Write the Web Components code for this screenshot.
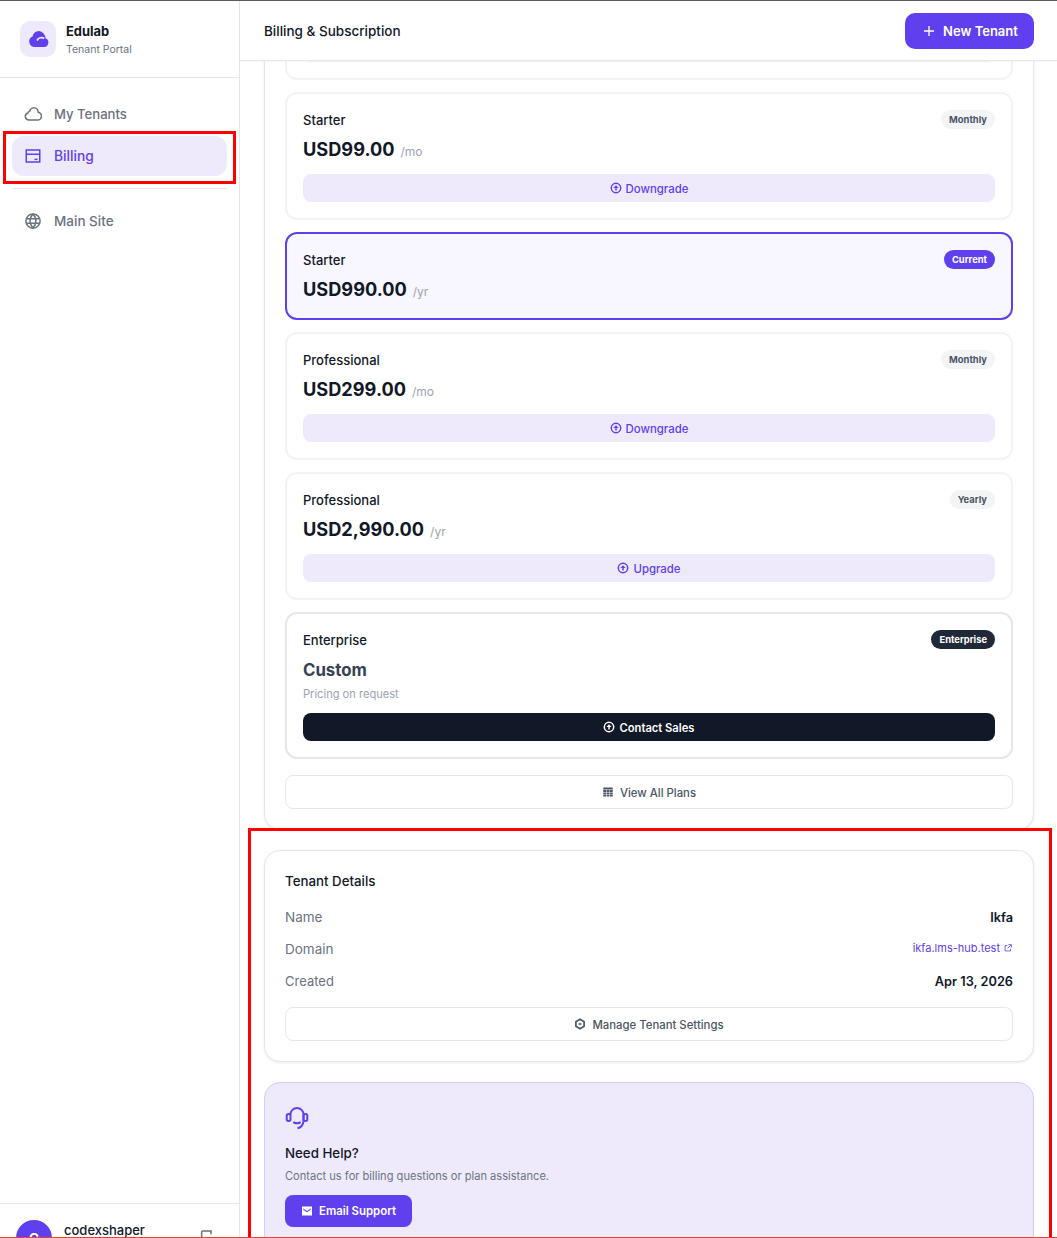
<!DOCTYPE html>
<html lang="en"><head><meta charset="utf-8"><title>Billing</title>
<style>
html,body{margin:0;height:1238px;overflow:hidden;background:#fff;font-family:Inter,"Liberation Sans",sans-serif;color:#111827}
</style></head><body>
<app-shell>
  <app-sidebar slot="side"></app-sidebar>
  <app-header slot="head" title="Billing &amp; Subscription"></app-header>
  <main-panel slot="main">
    <plan-list>
      <plan-card kind="stub"></plan-card>
      <plan-card name="Starter" price="USD99.00" per="/mo" badge="Monthly" action="Downgrade"></plan-card>
      <plan-card kind="current" name="Starter" price="USD990.00" per="/yr" badge="Current"></plan-card>
      <plan-card name="Professional" price="USD299.00" per="/mo" badge="Monthly" action="Downgrade"></plan-card>
      <plan-card name="Professional" price="USD2,990.00" per="/yr" badge="Yearly" action="Upgrade"></plan-card>
      <plan-card kind="enterprise" name="Enterprise" price="Custom" note="Pricing on request" badge="Enterprise" action="Contact Sales"></plan-card>
    </plan-list>
    <tenant-details></tenant-details>
    <help-card></help-card>
  </main-panel>
</app-shell>
<script>
const TINT='#eeeafc',BRAND='#6040ee';
const P={
 cloudFill:`<path fill="currentColor" d="M13 4a7 7 0 0 0-6.5 5.5A5.5 5.5 0 0 0 8 20h10a4.5 4.5 0 0 0 1.5-8.7A7.5 7.5 0 0 0 13 4z"/><path fill="none" stroke="${TINT}" stroke-width="1.7" d="M11 13.5c1.5-3 5-3.6 7.2-2"/>`,
 cloud:'<path fill="none" stroke="currentColor" stroke-width="2" d="M13 3.5a6 6 0 0 1 5.9 6.3 5.1 5.1 0 0 1-1.4 10.2H6.5a4.8 4.8 0 0 1-1.3-9.4 4 4 0 0 1 2.5-2.4A6 6 0 0 1 13 3.5z"/>',
 card:'<path fill="none" stroke="currentColor" stroke-width="2" d="M3 4h18v16H3zM3 9.5h18"/><path fill="currentColor" d="M14 15.5h4v2h-4z"/>',
 globe:'<g fill="none" stroke="currentColor" stroke-width="2"><circle cx="12" cy="12" r="9.5"/><path d="M3.2 9h17.6M3.2 15h17.6M12 2.5c-5.2 5.6-5.2 13.4 0 19M12 2.5c5.2 5.6 5.2 13.4 0 19"/></g>',
 plus:'<path fill="none" stroke="currentColor" stroke-width="2" d="M12 4.5v15M4.5 12h15"/>',
 up:'<g fill="none" stroke="currentColor" stroke-width="3"><circle cx="12" cy="12" r="9.4"/></g><path fill="currentColor" d="M12 6.4 17.2 12h-3.7v5h-3v-5H6.8z"/>',
 table:'<path fill="currentColor" d="M2.5 3h19v4h-19zM2.5 8.2h5.9v3.6H2.5zm7 0h5.2v3.6H9.5zm6.2 0h5.8v3.6h-5.8zM2.5 12.8h5.9v3.6H2.5zm7 0h5.2v3.6H9.5zm6.2 0h5.8v3.6h-5.8zM2.5 17.4h5.9V21H2.5zm7 0h5.2V21H9.5zm6.2 0h5.8V21h-5.8z"/>',
 gear:'<g fill="none" stroke="currentColor"><path stroke-width="3.4" d="M12 2.6 20.2 7.3v9.4L12 21.4 3.8 16.7V7.3z"/><circle cx="12" cy="12" r="2" stroke-width="2"/></g>',
 headset:'<g fill="none" stroke="currentColor" stroke-width="2"><path d="M5.5 8.5a6.5 6.5 0 0 1 13 0v6.5c0 4-3 6.8-6 7.3"/><path d="M9 16.5c2 1 4 1 6 0" stroke-linecap="round"/><rect x="1.7" y="8" width="3.8" height="7" rx="1.7"/><rect x="18.5" y="8" width="3.8" height="7" rx="1.7"/></g>',
 mail:'<path fill="currentColor" fill-rule="evenodd" d="M3 3h18a1 1 0 0 1 1 1v16a1 1 0 0 1-1 1H3a1 1 0 0 1-1-1V4a1 1 0 0 1 1-1zm1.5 4v2.4l7.5 5 7.5-5V7L12 12z"/>',
 ext:'<path fill="none" stroke="currentColor" stroke-width="2" d="M10 6H5v13h13v-5M13 4h7v7M20 4l-9 9"/>',
 logout:'<path fill="none" stroke="currentColor" stroke-width="2.4" d="M4 22V5a2 2 0 0 1 2-2h12v5M4 22h14v-5"/>'
};
function def(name,render){customElements.define(name,class extends HTMLElement{
  connectedCallback(){if(this.shadowRoot)return;this.attachShadow({mode:'open'}).innerHTML=render(this)}
})}
def('x-icon',el=>`<style>:host{display:inline-flex;flex:none;width:var(--s,16px);height:var(--s,16px)}svg{width:100%;height:100%;display:block}</style><svg viewBox="0 0 24 24" aria-hidden="true">${P[el.getAttribute('n')]}</svg>`);

def('app-shell',()=>`<style>
:host{display:grid;grid-template-columns:240px 1fr;grid-template-rows:60px 1fr;height:1238px;box-sizing:border-box;border-top:1px solid #5c5c5c;position:relative;overflow:hidden}
.side{grid-row:1/3;min-height:0;display:flex}
.head{min-width:0}.main{min-height:0;min-width:0;overflow:hidden}
.mark{position:absolute;border:3px solid #f00;box-sizing:border-box;pointer-events:none}
.m1{left:3px;top:130px;width:233px;height:53px}
.m2{left:248px;top:827px;width:804px;height:420px}
.line{position:absolute;left:0;right:0;bottom:0;height:1px;background:#d64a3e}
</style>
<div class="side"><slot name="side"></slot></div>
<div class="head"><slot name="head"></slot></div>
<div class="main"><slot name="main"></slot></div>
<i class="mark m1"></i><i class="mark m2"></i><i class="line"></i>`);

def('nav-item',el=>`<style>
:host{display:flex;align-items:center;gap:12px;height:40px;padding:0 12px;border-radius:12px;font-size:13.5px;font-weight:500;color:#6b7280;--s:18px;box-sizing:border-box}
:host([active]){background:${TINT};color:${BRAND};font-size:13.8px}
</style><x-icon n="${el.getAttribute('icon')}"></x-icon><slot></slot>`);

def('app-sidebar',()=>`<style>
:host{display:flex;flex-direction:column;width:240px;box-sizing:border-box;border-right:1px solid #e5e7eb;background:#fff;height:100%}
.brand{display:flex;align-items:center;gap:10px;height:76px;padding:0 20px;border-bottom:1px solid #e5e7eb;flex:none}
.logo{width:36px;height:36px;border-radius:10px;background:${TINT};color:${BRAND};display:flex;align-items:center;justify-content:center;--s:24px}
.txt{padding-top:2px}
.t1{font-size:12.9px;font-weight:700;line-height:18px;color:#111827}
.t2{font-size:10.5px;line-height:17px;color:#6b7280}
nav{padding:16px 12px 0;display:flex;flex-direction:column;gap:2px;flex:1}
hr{border:0;border-top:1px solid #e5e7eb;margin:10px 0;width:100%}
.foot{height:35px;flex:none;box-sizing:border-box;border-top:1px solid #e5e7eb;display:flex;gap:12px;padding:16px 24px 0 16px;overflow:hidden}
.av{width:36px;height:36px;border-radius:50%;background:${BRAND};color:#fff;font-size:14px;font-weight:600;display:flex;align-items:center;justify-content:center;flex:none}
.name{font-size:13px;font-weight:500;line-height:13px;flex:1;color:#111827;padding-top:4px}
.foot x-icon{color:#6b7280;margin-top:9px;--s:16px}
</style>
<div class="brand"><div class="logo"><x-icon n="cloudFill"></x-icon></div><div class="txt"><div class="t1">Edulab</div><div class="t2">Tenant Portal</div></div></div>
<nav><nav-item icon="cloud" style="font-size:13.1px">My Tenants</nav-item><nav-item icon="card" active>Billing</nav-item><hr><nav-item icon="globe">Main Site</nav-item></nav>
<div class="foot"><div class="av">C</div><div class="name">codexshaper</div><x-icon n="logout"></x-icon></div>`);

def('app-btn',el=>`<style>
:host{display:inline-flex;align-items:center;justify-content:center;gap:var(--g,4px);box-sizing:border-box;border-radius:var(--r,8px);font-size:var(--f,11.4px);font-weight:500;--s:var(--icon,12px);white-space:nowrap}
:host([v=primary]){background:${BRAND};color:#fff;font-weight:600}
:host([v=tint]){background:${TINT};color:${BRAND};height:28px;width:100%}
:host([v=dark]){background:#111827;color:#fff;height:28px;width:100%;font-weight:600;--f:11.2px}
:host([v=outline]){border:1px solid #e5e7eb;color:#4b5563;height:34px;width:100%;--g:6px;--f:11.35px}
:host(:not([v=primary])) .t{padding-top:2px}
</style><x-icon n="${el.getAttribute('icon')}"></x-icon><span class="t"><slot></slot></span>`);

def('app-header',el=>`<style>
:host{display:flex;align-items:center;justify-content:space-between;height:60px;box-sizing:border-box;padding:0 23px 0 24px;border-bottom:1px solid #e5e7eb;background:#fff;position:relative;z-index:1;box-shadow:0 1px 2px rgba(0,0,0,.03)}
h1{margin:0;font-size:13.5px;font-weight:500;color:#111827}
app-btn{height:36px;width:129px;--r:10px;--f:13px;--g:6px;--icon:16px}
</style><h1>${el.getAttribute('title').replace('&','&amp;')}</h1><app-btn v="primary" icon="plus">New Tenant</app-btn>`);

def('main-panel',()=>`<style>
:host{display:flex;flex-direction:column;gap:20px;padding:0 23px 0 24px;margin-top:-60px}
</style><slot></slot>`);

def('plan-list',()=>`<style>
:host{display:block;border:1px solid #e5e7eb;border-radius:16px;padding:20px;box-shadow:0 1px 3px rgba(0,0,0,.08);background:#fff}
.list{display:flex;flex-direction:column;gap:12px;margin-bottom:16px}
</style><div class="list"><slot></slot></div><app-btn v="outline" icon="table">View All Plans</app-btn>`);

def('plan-card',el=>{
 const a=n=>el.getAttribute(n),k=a('kind')||'';
 if(k==='stub')return `<style>:host{display:block;box-sizing:border-box;height:58px;border:2px solid #f3f4f6;border-radius:12px;padding:0 16px}.b{height:38px;background:#f3f4f6;border-radius:8px}</style><div class="b"></div>`;
 const v=k==='enterprise'?'dark':'tint';
 return `<style>
:host{display:block;box-sizing:border-box;border:2px solid #f3f4f6;border-radius:12px;padding:16px;background:#fff}
:host([kind=current]){border-color:${BRAND};background:#f8f6fe}
:host([kind=enterprise]){border-color:#e5e7eb}
.top{display:flex;justify-content:space-between;align-items:flex-start;height:21px}
.name{font-size:13px;font-weight:500;line-height:21px;color:#111827}
.badge{font-size:9.4px;font-weight:700;line-height:19px;height:19px;padding:0 8px;border-radius:10px;background:#f3f4f6;color:#4b5563}
:host([kind=current]) .badge{background:${BRAND};color:#fff}
:host([kind=enterprise]) .badge{background:#1f2937;color:#fff}
.price{display:flex;align-items:baseline;gap:6px;margin-top:6px;height:25px;line-height:25px;font-size:18.2px;font-weight:700;color:#111827}
:host([kind=enterprise]) .price{font-size:16.8px;color:#374151;margin-top:7px}
.per{font-size:12px;font-weight:400;color:#9ca3af}
.note{font-size:11.1px;line-height:18px;color:#9ca3af;margin-top:2px}
.wrap{display:flex;margin-top:12px}
:host([kind=enterprise]) .wrap{margin-top:10px}
</style>
<div class="top"><div class="name">${a('name')}</div><div class="badge">${a('badge')}</div></div>
<div class="price">${a('price')}${a('per')?`<span class="per">${a('per')}</span>`:''}</div>
${a('note')?`<div class="note">${a('note')}</div>`:''}
${a('action')?`<div class="wrap"><app-btn v="${v}" icon="up">${a('action')}</app-btn></div>`:''}`;
});

def('tenant-details',()=>`<style>
:host{display:block;border:1px solid #e5e7eb;border-radius:16px;padding:20px;box-shadow:0 1px 3px rgba(0,0,0,.08);background:#fff}
h2{margin:0 0 10px;font-size:13.3px;font-weight:500;line-height:20px;color:#111827}
.row{display:flex;justify-content:space-between;align-items:center;height:32px;font-size:13.5px;color:#6b7280}
b{font-size:12.75px;font-weight:600;color:#111827}
.link{font-size:11px;color:${BRAND};display:flex;align-items:center;gap:3px;--s:10px;margin-top:-3px}
.btn{margin-top:10px;display:flex}
</style>
<h2>Tenant Details</h2>
<div class="row"><span>Name</span><b>Ikfa</b></div>
<div class="row"><span>Domain</span><span class="link">ikfa.lms-hub.test<x-icon n="ext"></x-icon></span></div>
<div class="row"><span style="font-size:13px">Created</span><b>Apr 13, 2026</b></div>
<div class="btn"><app-btn v="outline" icon="gear">Manage Tenant Settings</app-btn></div>`);

def('help-card',()=>`<style>
:host{display:block;border:1px solid #d6ccfb;border-radius:16px;padding:20px;background:${TINT};height:200px;box-sizing:border-box}
.ic{color:${BRAND};--s:24px;height:24px;margin-top:3px;display:block}
h2{margin:13px 0 0;font-size:13.3px;font-weight:500;line-height:20px;color:#111827}
p{margin:4px 0 0;font-size:11.1px;line-height:18px;color:#6b7280}
app-btn{margin-top:10px;height:32px;width:127px;--g:6px}
</style>
<x-icon class="ic" n="headset"></x-icon><h2>Need Help?</h2><p>Contact us for billing questions or plan assistance.</p>
<app-btn v="primary" icon="mail">Email Support</app-btn>`);
</script>
</body></html>
